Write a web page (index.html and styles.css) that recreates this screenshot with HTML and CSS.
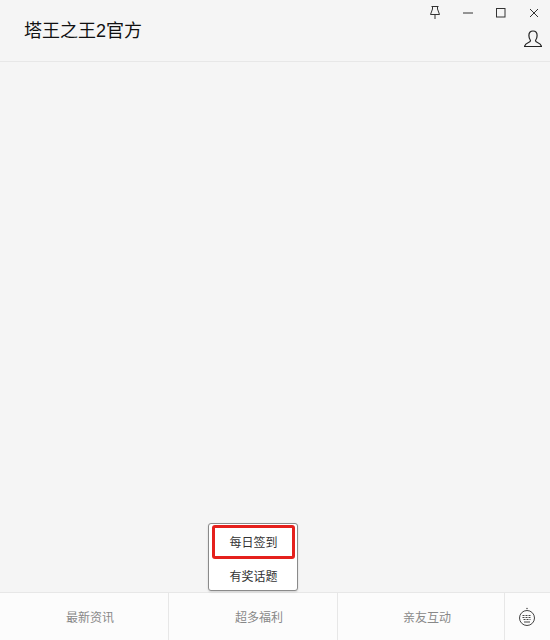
FILE: index.html
```html
<!DOCTYPE html>
<html lang="zh-CN">
<head>
    <meta charset="UTF-8">
    <title>塔王之王2官方</title>
    <link rel="stylesheet" href="styles.css">
</head>
<body>
    <div id="screen">
        <div class="header">
            <h1 class="title">塔王之王2官方</h1>
            <div class="header-right">
                <div class="win-btns">
                    <span class="win-btn">
                        <svg width="10" height="13" viewBox="0 0 10 13"><path d="M1.500 .5h7M2.500 .5v2.500L.5 8.500h9L7.500 3V.5M5 8.500V13" fill="none" stroke="#333" stroke-width="1"/></svg>
                    </span>
                    <span class="win-btn">
                        <svg width="10" height="10" viewBox="0 0 10 10"><path d="M0 5h10" stroke="#333" stroke-width="1"/></svg>
                    </span>
                    <span class="win-btn">
                        <svg width="10" height="10" viewBox="0 0 10 10"><rect x="0.500" y="0.500" width="8.500" height="8.500" fill="none" stroke="#333" stroke-width="1"/></svg>
                    </span>
                    <span class="win-btn">
                        <svg width="10" height="10" viewBox="0 0 10 10"><path d="M1 1l8 8M9 1l-8 8" stroke="#333" stroke-width="1"/></svg>
                    </span>
                </div>
                <span class="user-btn">
                    <svg width="18" height="18" viewBox="0 0 18 18"><path d="M6.500 10.500C5.300 9 4.900 7.500 4.900 5.500 4.900 2.700 6.600 1 9 1s4.100 1.700 4.100 4.500c0 2-.4 3.500-1.600 5 0 1 .5 1.500 2 2 1.700.6 3.500 1.500 4 4H.5c.5-2.500 2.300-3.400 4-4 1.500-.5 2-1 2-2z" fill="none" stroke="#222" stroke-width="1.200"/></svg>
                </span>
            </div>
        </div>

        <div class="content"></div>

        <div class="popup">
            <div class="popup-item active">每日签到</div>
            <div class="popup-item">有奖话题</div>
        </div>

        <div class="tabs">
            <div class="tab tab-1">最新资讯</div>
            <div class="tab tab-2">超多福利</div>
            <div class="tab tab-3">亲友互动</div>
            <div class="keyboard">
                <svg width="18" height="20" viewBox="0 0 18 20">
                    <circle cx="9" cy="1.500" r="0.800" fill="#555"/>
                    <circle cx="9" cy="11" r="7.500" fill="none" stroke="#444" stroke-width="1"/>
                    <path d="M4.500 8.500h9M4.500 10.500h9" stroke="#444" stroke-width="1.200" stroke-dasharray="2 1"/>
                    <path d="M5.500 12.500h7" stroke="#444" stroke-width="1.200" stroke-dasharray="2 1"/>
                    <path d="M6 15h6" stroke="#444" stroke-width="1"/>
                </svg>
            </div>
        </div>
    </div>
</body>
</html>
```

FILE: styles.css
```css
*{
    margin:0;
    padding:0;
    box-sizing:border-box;
    font-family:"Liberation Sans","Noto Sans CJK SC",sans-serif;
}
#screen{
    position:relative;
    width:550px;
    height:640px;
    overflow:hidden;
    background-color:#f5f5f5;
    display:flex;
    flex-direction:column;
}
.header{
    height:62px;
    flex-shrink:0;
    border-bottom:1px solid #e7e7e7;
    display:flex;
    justify-content:space-between;
    padding-left:24px;
}
.title{
    font-size:18px;
    font-weight:normal;
    line-height:62px;
    color:#111;
}
.header-right{
    display:flex;
    flex-direction:column;
    align-items:flex-end;
}
.win-btns{
    display:flex;
    height:25px;
}
.win-btn{
    width:33px;
    display:flex;
    align-items:center;
    justify-content:center;
}
.user-btn{
    display:block;
    height:18px;
    margin-top:5px;
    margin-right:8px;
}
.content{
    flex:1;
}
.popup{
    position:absolute;
    left:208px;
    top:523px;
    width:90px;
    height:68px;
    background-color:#fff;
    border:1px solid #8a8a8a;
    border-radius:3px;
    box-shadow:0 1px 2px rgba(0,0,0,0.15);
    padding:1px 2px 1px 3px;
}
.popup-item{
    height:30px;
    line-height:32px;
    margin-top:2px;
    text-align:center;
    font-size:12px;
    color:#333;
}
.popup-item.active{
    height:34px;
    line-height:30px;
    margin-top:0;
    border:3px solid #e5201c;
    border-radius:3px;
}
.tabs{
    height:48px;
    flex-shrink:0;
    background-color:#fcfcfc;
    border-top:1px solid #e7e7e7;
    display:flex;
}
.keyboard{
    flex:1;
    border-left:1px solid #e7e7e7;
    display:flex;
    align-items:center;
    justify-content:center;
    padding-top:1px;
    padding-right:2px;
}
.tab{
    text-align:center;
    line-height:50px;
    font-size:12px;
    color:#888;
    border-left:1px solid #e7e7e7;
    padding-left:12px;
}
.tab-1{
    width:168px;
    border-left:none;
}
.tab-2{
    width:169px;
}
.tab-3{
    width:167px;
}
```
